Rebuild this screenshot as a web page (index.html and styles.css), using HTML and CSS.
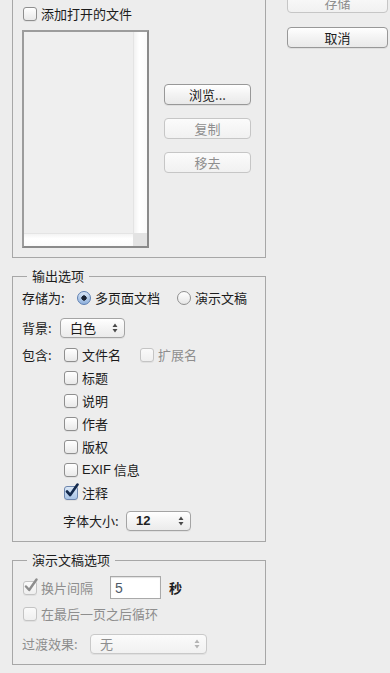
FILE: index.html
```html
<!DOCTYPE html>
<html lang="zh-CN">
<head>
    <meta charset="UTF-8">
    <meta name="viewport" content="width=device-width, initial-scale=1.0">
    <title>PDF 演示文稿</title>
    <link rel="stylesheet" href="styles.css">
</head>
<body>
    <div class="left">
        <fieldset class="group group-files">
            <div class="row row-open">
                <span class="check"></span>
                <span>添加打开的文件</span>
            </div>
            <div class="files">
                <div class="file-list">
                    <div class="list-main">
                        <div class="list-body"></div>
                        <div class="vscroll"></div>
                    </div>
                    <div class="list-foot">
                        <div class="hscroll"></div>
                        <div class="corner"></div>
                    </div>
                </div>
                <div class="file-buttons">
                    <button class="btn">浏览...</button>
                    <button class="btn" disabled>复制</button>
                    <button class="btn" disabled>移去</button>
                </div>
            </div>
        </fieldset>

        <fieldset class="group group-output">
            <legend>输出选项</legend>
            <div class="row row-save">
                <span class="lbl lbl-save">存储为:</span>
                <span class="radio on"></span>
                <span>多页面文档</span>
                <span class="radio second"></span>
                <span>演示文稿</span>
            </div>
            <div class="row row-bg">
                <span class="lbl lbl-bg">背景:</span>
                <div class="popup popup-small">
                    <span>白色</span>
                    <span class="arrows">
                        <svg width="6" height="10" viewBox="0 0 6 10"><path d="M3 0.5 L5.5 4 H0.5 Z M3 9.5 L5.5 6 H0.5 Z" fill="currentColor"/></svg>
                    </span>
                </div>
            </div>
            <div class="row row-inc">
                <span class="lbl lbl-inc">包含:</span>
                <span class="check"></span>
                <span>文件名</span>
                <span class="check off ext"></span>
                <span class="muted">扩展名</span>
            </div>
            <div class="row sub"><span class="check"></span><span>标题</span></div>
            <div class="row sub"><span class="check"></span><span>说明</span></div>
            <div class="row sub"><span class="check"></span><span>作者</span></div>
            <div class="row sub"><span class="check"></span><span>版权</span></div>
            <div class="row sub"><span class="check"></span><span class="latin">EXIF</span><span>&nbsp;信息</span></div>
            <div class="row sub">
                <span class="check checked">
                    <svg width="16" height="16" viewBox="0 0 16 16"><path d="M3 8.5 L6.2 12 L13.5 1.5" fill="none" stroke="#142a4d" stroke-width="2.6" stroke-linecap="round" stroke-linejoin="round"/></svg>
                </span>
                <span>注释</span>
            </div>
            <div class="row row-size">
                <span class="lbl lbl-size">字体大小:</span>
                <div class="popup popup-small">
                    <span class="latin num">12</span>
                    <span class="arrows">
                        <svg width="6" height="10" viewBox="0 0 6 10"><path d="M3 0.5 L5.5 4 H0.5 Z M3 9.5 L5.5 6 H0.5 Z" fill="currentColor"/></svg>
                    </span>
                </div>
            </div>
        </fieldset>

        <fieldset class="group group-show">
            <legend>演示文稿选项</legend>
            <div class="row row-interval">
                <span class="check off checked-off">
                    <svg width="16" height="16" viewBox="0 0 16 16"><path d="M3 8.5 L6.2 12 L13.5 1.5" fill="none" stroke="#8d8d8d" stroke-width="2.4" stroke-linecap="round" stroke-linejoin="round"/></svg>
                </span>
                <span class="muted">换片间隔</span>
                <div class="field latin">5</div>
                <span class="sec">秒</span>
            </div>
            <div class="row row-loop">
                <span class="check off"></span>
                <span class="muted">在最后一页之后循环</span>
            </div>
            <div class="row row-trans">
                <span class="lbl lbl-trans muted">过渡效果:</span>
                <div class="popup popup-wide off">
                    <span>无</span>
                    <span class="arrows">
                        <svg width="6" height="10" viewBox="0 0 6 10"><path d="M3 0.5 L5.5 4 H0.5 Z M3 9.5 L5.5 6 H0.5 Z" fill="currentColor"/></svg>
                    </span>
                </div>
            </div>
        </fieldset>
    </div>

    <div class="right">
        <button class="btn btn-wide save" disabled>存储</button>
        <button class="btn btn-wide">取消</button>
    </div>
</body>
</html>
```

FILE: styles.css
```css
body {
    margin: 0;
    padding-left: 12px;
    height: 673px;
    overflow: hidden;
    display: flex;
    align-items: flex-start;
    background: #ededed;
    color: #1c1c1c;
    font-family: "Noto Sans CJK SC", "Liberation Sans", sans-serif;
    font-size: 13px;
    line-height: 16px;
}

.left {
    width: 254px;
}

.right {
    margin-left: 21px;
    display: flex;
    flex-direction: column;
}

.group {
    box-sizing: border-box;
    width: 254px;
    margin: 0;
    padding: 0 0 10px 9px;
    border: 1px solid #a7a7a7;
    min-width: 0;
}

.group legend {
    margin-left: 5px;
    padding: 0 5px;
    line-height: 16px;
}

.group-files {
    border-top: none;
    padding-bottom: 9px;
}

.group-output {
    margin-top: 10px;
    padding-top: 4px;
}

.group-show {
    margin-top: 10px;
    padding-top: 8px;
}

.row {
    display: flex;
    align-items: center;
    height: 20px;
    white-space: nowrap;
}

.row-open {
    margin-top: 4px;
    padding-left: 1px;
}

.files {
    display: flex;
    margin-top: 6px;
}

.file-list {
    box-sizing: border-box;
    width: 127px;
    height: 218px;
    display: flex;
    flex-direction: column;
    border: 1px solid #8d8d8d;
    border-width: 2px 2px 2px 2px;
    border-color: #9c9c9c #8a8a8a #8a8a8a #9c9c9c;
    background: #efefef;
}

.list-main {
    flex: 1;
    display: flex;
}

.list-body {
    flex: 1;
}

.vscroll {
    width: 13px;
    background: linear-gradient(90deg, #f2f2f2, #ffffff 40%, #fafafa);
    border-left: 1px solid #e4e4e4;
}

.list-foot {
    display: flex;
    height: 13px;
}

.hscroll {
    flex: 1;
    background: linear-gradient(#f3f3f3, #ffffff 40%, #fafafa);
    border-top: 1px solid #e4e4e4;
}

.corner {
    width: 14px;
    background: #e3e3e3;
}

.file-buttons {
    display: flex;
    flex-direction: column;
    gap: 13px;
    margin: 54px 0 0 15px;
}

.btn {
    box-sizing: border-box;
    width: 87px;
    height: 21px;
    padding: 0;
    border: 1px solid #989898;
    border-radius: 4px;
    background: linear-gradient(#ffffff, #f3f3f3 50%, #e9e9e9);
    color: #1c1c1c;
    font-family: inherit;
    font-size: 13px;
    line-height: 18px;
    box-shadow: 0 1px 0 rgba(0, 0, 0, 0.06);
}

.btn:disabled {
    border-color: #c6c6c6;
    color: #8e8e8e;
    background: linear-gradient(#fbfbfb, #f1f1f1);
    box-shadow: none;
}

.btn-wide {
    width: 101px;
}

.right .btn + .btn {
    margin-top: 14px;
}

.save {
    margin-top: -8px;
}

.check {
    box-sizing: border-box;
    position: relative;
    flex: none;
    width: 14px;
    height: 14px;
    margin-right: 4px;
    border: 1px solid #8f8f8f;
    border-radius: 3px;
    background: linear-gradient(#ffffff, #e9e9e9);
    box-shadow: 0 1px 0 rgba(0, 0, 0, 0.05);
}

.check.off {
    border-color: #c4c4c4;
    background: linear-gradient(#fafafa, #efefef);
}

.check.checked {
    border-color: #6e86ad;
    background: linear-gradient(#dbe8f7, #a9c4e6);
}

.check svg {
    position: absolute;
    left: -1px;
    top: -4px;
}

.radio {
    box-sizing: border-box;
    position: relative;
    flex: none;
    width: 14px;
    height: 14px;
    margin-right: 4px;
    border: 1px solid #8f8f8f;
    border-radius: 50%;
    background: linear-gradient(#ffffff, #e6e6e6);
}

.radio.on {
    border-color: #5d7fb2;
    background: radial-gradient(circle at 50% 50%, #1b2433 0 2.4px, transparent 2.9px),
                linear-gradient(#d9e6f6, #8fb1dc);
}

.radio.second {
    margin-left: 17px;
}

.lbl {
    flex: none;
}

.lbl-save { width: 55px; }
.lbl-bg { width: 38px; }
.lbl-inc { width: 42px; }
.lbl-size { width: 63px; }
.lbl-trans { width: 68px; }

.row-bg { margin-top: 10px; }
.row-inc { margin-top: 7px; }
.sub { margin-top: 3px; padding-left: 42px; }
.row-size { margin-top: 8px; padding-left: 41px; }

.ext {
    margin-left: 19px;
}

.muted {
    color: #8e8e8e;
}

.latin {
    font-family: "Liberation Sans", sans-serif;
}

.num {
    font-weight: bold;
    color: #222;
}

.popup {
    box-sizing: border-box;
    display: flex;
    align-items: center;
    justify-content: space-between;
    height: 20px;
    padding: 0 6px 0 9px;
    border: 1px solid #a4a4a4;
    border-radius: 4px;
    background: linear-gradient(#ffffff, #f4f4f4 50%, #ebebeb);
    box-shadow: 0 1px 0 rgba(0, 0, 0, 0.05);
}

.popup-small {
    width: 65px;
}

.popup-wide {
    width: 117px;
}

.popup .arrows {
    display: flex;
    color: #4a4a4a;
}

.popup.off {
    border-color: #c9c9c9;
    color: #8e8e8e;
    background: linear-gradient(#fbfbfb, #f1f1f1);
}

.popup.off .arrows {
    color: #b4b4b4;
}

.row-interval {
    height: 23px;
    padding-left: 1px;
}

.field {
    box-sizing: border-box;
    width: 51px;
    height: 23px;
    margin-left: 17px;
    padding: 3px 0 0 4px;
    border: 1px solid #a9a9a9;
    background: #ffffff;
    box-shadow: inset 0 1px 1px rgba(0, 0, 0, 0.12);
    color: #4f5a68;
    font-size: 14px;
}

.sec {
    margin-left: 8px;
    font-weight: bold;
}

.row-loop {
    margin-top: 5px;
    padding-left: 1px;
}

.row-trans {
    margin-top: 10px;
}
```
